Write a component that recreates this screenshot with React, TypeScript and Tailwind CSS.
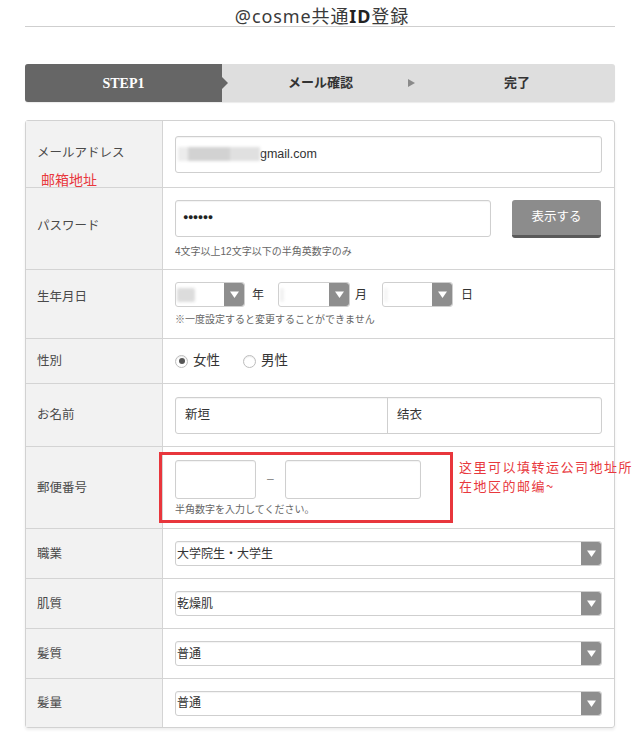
import React from "react";

const FONT = "font-['Liberation_Sans','Noto_Sans_CJK_JP',sans-serif]";

function DownArrow() {
  return (
    <span className="flex h-full w-[20px] shrink-0 items-center justify-center rounded-r-[3px] bg-[#8e8e8e]">
      <svg width="9" height="7" viewBox="0 0 9 7">
        <path d="M0 0.5h9L4.5 7z" fill="#fff" />
      </svg>
    </span>
  );
}

function Row({
  className,
  labelClassName,
  label,
  children,
}: {
  className: string;
  labelClassName?: string;
  label: React.ReactNode;
  children: React.ReactNode;
}) {
  return (
    <div className={`relative flex box-border ${className}`}>
      <div
        className={`flex w-[137px] shrink-0 border-r border-[#d4d4d4] bg-[#f2f2f2] pl-[11px] text-[12.5px] leading-[16px] text-[#4a4a4a] ${
          labelClassName ?? "items-center"
        }`}
      >
        {label}
      </div>
      <div className="flex min-w-0 flex-1 flex-col justify-center px-[12px]">{children}</div>
    </div>
  );
}

function WideSelect({ value }: { value: string }) {
  return (
    <div className="flex h-[25px] w-full items-stretch rounded-[3px] border border-[#cfcfcf] bg-white shadow-[inset_0_1px_1px_rgba(0,0,0,0.05)]">
      <span className="flex flex-1 items-center pl-[1px] text-[12px] text-[#333]">{value}</span>
      <DownArrow />
    </div>
  );
}

function DateSelect({ width, blur }: { width: string; blur?: string }) {
  return (
    <div className={`flex h-[25px] items-stretch rounded-[3px] border border-[#cfcfcf] bg-white ${width}`}>
      <span className="flex flex-1 items-center pl-[1px]">
        {blur ? <span className={`block h-[14px] rounded-[2px] bg-[#dcdcdc] blur-[1.5px] ${blur}`} /> : null}
      </span>
      <DownArrow />
    </div>
  );
}

function Radio({ checked }: { checked?: boolean }) {
  return (
    <span className="flex h-[13px] w-[13px] items-center justify-center rounded-full border border-[#bdbdbd] bg-white shadow-[inset_0_1px_1px_rgba(0,0,0,0.08)]">
      {checked ? <span className="h-[6px] w-[6px] rounded-full bg-[#555]" /> : null}
    </span>
  );
}

export default function App() {
  return (
    <div className={`relative h-[754px] w-[640px] overflow-hidden bg-white text-[#333] ${FONT}`}>
      {/* page title */}
      <h1 className="mx-[25px] box-border h-[27px] border-b border-[#cfcfcf] pl-[4px] pt-[6px] text-center text-[18px] leading-[20px] font-normal tracking-[0.9px] text-[#3a3a3a] font-['Noto_Sans','Noto_Sans_CJK_JP',sans-serif]">
        @cosme共通<span className="font-bold text-[#222]">ID</span>登録
      </h1>

      {/* steps */}
      <div className="mx-[25px] mt-[37px] flex h-[38px] rounded-[3px] bg-[#dedede] text-[13px] font-bold shadow-[0_1px_1px_rgba(0,0,0,0.08)]">
        <div className="relative flex w-[197px] items-center justify-center rounded-l-[3px] bg-[#666] text-white font-['Liberation_Serif','Noto_Sans_CJK_JP',serif] text-[14px]">
          STEP1
          <span className="absolute right-[-6px] top-1/2 -translate-y-1/2 border-y-[6px] border-l-[6px] border-y-transparent border-l-[#666]" />
        </div>
        <div className="relative flex w-[197px] items-center justify-center text-[#333]">
          メール確認
          <span className="absolute right-[4px] top-1/2 -translate-y-1/2 border-y-[4px] border-l-[7px] border-y-transparent border-l-[#8a8a8a]" />
        </div>
        <div className="flex flex-1 items-center justify-center text-[#333]">完了</div>
      </div>

      {/* form table */}
      <div className="mx-[25px] mt-[18px] rounded-[3px] border border-[#d2d2d2] shadow-[0_2px_3px_rgba(0,0,0,0.07)]">
        <Row
          className="h-[66px]"
          labelClassName="flex-col justify-start pt-[23px]"
          label={
            <>
              <span className="leading-[18px]">メールアドレス</span>
              <span className="mt-[8px] pl-[4px] text-[14px] leading-[18px] text-[#e8383d] font-['Noto_Sans_CJK_SC',sans-serif]">
                邮箱地址
              </span>
            </>
          }
        >
          <div className="flex h-[37px] items-center rounded-[3px] border border-[#cfcfcf] bg-white text-[12.5px] text-[#333] shadow-[inset_0_1px_1px_rgba(0,0,0,0.05)]">
            <span className="ml-[2px] flex h-[14px] w-[82px] items-center blur-[1.5px]">
              <span className="h-full w-[10px] bg-[#ececec]" />
              <span className="h-full w-[42px] bg-[#d2d2d2]" />
              <span className="h-full w-[30px] bg-[#e0e0e0]" />
            </span>
            <span>gmail.com</span>
          </div>
        </Row>

        <Row className="h-[82px] border-t border-[#d4d4d4]" labelClassName="items-center pb-[6px]" label="パスワード">
          <div className="flex items-start gap-[21px]">
            <div className="flex h-[37px] w-[316px] items-center rounded-[3px] border border-[#cfcfcf] bg-white pl-[7px] text-[9px] font-bold tracking-[-0.5px] text-[#222] shadow-[inset_0_1px_1px_rgba(0,0,0,0.05)]">
              ●●●●●●
            </div>
            <div className="box-border flex h-[38px] w-[89px] items-center justify-center rounded-[3px] border-b-[3px] border-[#5a5a5a] bg-[#8c8c8c] text-[12.5px] text-white">
              表示する
            </div>
          </div>
          <p className="mt-[7px] text-[10px] leading-[13px] text-[#666]">4文字以上12文字以下の半角英数字のみ</p>
        </Row>

        <Row className="h-[69px] border-t border-[#d4d4d4]" labelClassName="items-center pb-[15px]" label="生年月日">
          <div className="flex items-center text-[12px] text-[#333]">
            <DateSelect width="w-[70px]" blur="w-[18px]" />
            <span className="ml-[7px] mr-[14px]">年</span>
            <DateSelect width="w-[72px]" blur="w-[4px] opacity-40" />
            <span className="ml-[5px] mr-[15px]">月</span>
            <DateSelect width="w-[71px]" blur="w-[4px] opacity-30" />
            <span className="ml-[8px]">日</span>
          </div>
          <p className="mt-[6px] text-[10px] leading-[13px] text-[#666]">※一度設定すると変更することができません</p>
        </Row>

        <Row className="h-[45px] border-t border-[#d4d4d4]" label="性別">
          <div className="flex items-center text-[13.5px] text-[#333]">
            <Radio checked />
            <span className="ml-[5px] mr-[23px]">女性</span>
            <Radio />
            <span className="ml-[5px]">男性</span>
          </div>
        </Row>

        <Row className="h-[63px] border-t border-[#d4d4d4]" label="お名前">
          <div className="flex h-[37px] items-stretch rounded-[3px] border border-[#cfcfcf] bg-white text-[12.5px] text-[#333] shadow-[inset_0_1px_1px_rgba(0,0,0,0.05)]">
            <span className="flex w-[212px] items-center border-r border-[#cfcfcf] pl-[9px]">新垣</span>
            <span className="flex flex-1 items-center pl-[9px]">结衣</span>
          </div>
        </Row>

        <Row className="h-[82px] border-t border-[#d4d4d4]" label="郵便番号">
          <div className="flex items-center">
            <div className="h-[39px] w-[81px] rounded-[3px] border border-[#cfcfcf] bg-white shadow-[inset_0_1px_1px_rgba(0,0,0,0.05)]" />
            <span className="mx-[11px] text-[12px] text-[#888]">–</span>
            <div className="h-[39px] w-[136px] rounded-[3px] border border-[#cfcfcf] bg-white shadow-[inset_0_1px_1px_rgba(0,0,0,0.05)]" />
          </div>
          <p className="mt-[4px] text-[10px] leading-[13px] text-[#666]">半角数字を入力してください。</p>
          <span className="pointer-events-none absolute left-[133px] top-[5px] h-[71px] w-[294px] border-[3px] border-[#e8363c]" />
          <div className="absolute left-[433px] top-[10px] flex flex-col whitespace-nowrap text-[13px] leading-[19px] tracking-[1.5px] text-[#e8383d] font-['Noto_Sans_CJK_SC',sans-serif]">
            <span>这里可以填转运公司地址所</span>
            <span>在地区的邮编~</span>
          </div>
        </Row>

        <Row className="h-[50px] border-t border-[#d4d4d4]" label="職業">
          <WideSelect value="大学院生・大学生" />
        </Row>
        <Row className="h-[50px] border-t border-[#d4d4d4]" label="肌質">
          <WideSelect value="乾燥肌" />
        </Row>
        <Row className="h-[50px] border-t border-[#d4d4d4]" label="髪質">
          <WideSelect value="普通" />
        </Row>
        <Row className="h-[49px] border-t border-[#d4d4d4]" label="髪量">
          <WideSelect value="普通" />
        </Row>
      </div>
    </div>
  );
}
